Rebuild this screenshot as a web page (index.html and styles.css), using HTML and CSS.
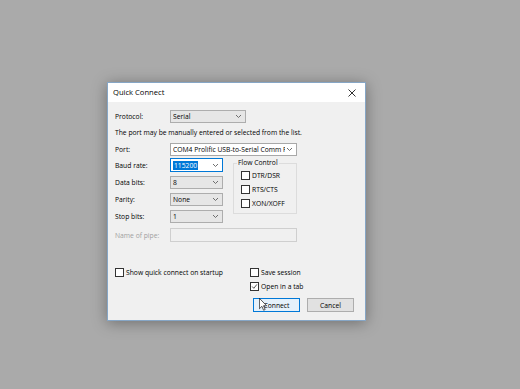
FILE: index.html
```html
<!DOCTYPE html>
<html lang="en">

<head>
    <meta charset="UTF-8">
    <title>Quick Connect</title>
    <link rel="stylesheet" href="styles.css">
</head>

<body>
    <div class="window">
        <div class="titlebar">
            <span class="title">Quick Connect</span>
            <svg class="close" viewBox="0 0 8 8"><path d="M0.5 0.5L7.5 7.5M7.5 0.5L0.5 7.5" /></svg>
        </div>
        <div class="content">
            <div class="row">
                <span class="label">Protocol:</span>
                <div class="combo list protocol">
                    <span class="value">Serial</span>
                    <svg class="chevron" viewBox="0 0 5 3"><path d="M0 0L2.5 2.5L5 0" /></svg>
                </div>
            </div>
            <p class="hint">The port may be manually entered or selected from the list.</p>
            <div class="row port-row">
                <span class="label">Port:</span>
                <div class="combo edit wide">
                    <span class="value">COM4 Prolific USB-to-Serial Comm Port</span>
                    <svg class="chevron" viewBox="0 0 5 3"><path d="M0 0L2.5 2.5L5 0" /></svg>
                </div>
            </div>
            <div class="serial">
                <div class="fields">
                    <div class="row">
                        <span class="label">Baud rate:</span>
                        <div class="combo edit narrow focused">
                            <span class="value"><span class="selected">115200</span></span>
                            <svg class="chevron" viewBox="0 0 5 3"><path d="M0 0L2.5 2.5L5 0" /></svg>
                        </div>
                    </div>
                    <div class="row">
                        <span class="label">Data bits:</span>
                        <div class="combo list narrow">
                            <span class="value">8</span>
                            <svg class="chevron" viewBox="0 0 5 3"><path d="M0 0L2.5 2.5L5 0" /></svg>
                        </div>
                    </div>
                    <div class="row">
                        <span class="label">Parity:</span>
                        <div class="combo list narrow">
                            <span class="value">None</span>
                            <svg class="chevron" viewBox="0 0 5 3"><path d="M0 0L2.5 2.5L5 0" /></svg>
                        </div>
                    </div>
                    <div class="row">
                        <span class="label">Stop bits:</span>
                        <div class="combo list narrow">
                            <span class="value">1</span>
                            <svg class="chevron" viewBox="0 0 5 3"><path d="M0 0L2.5 2.5L5 0" /></svg>
                        </div>
                    </div>
                </div>
                <fieldset class="flow">
                    <legend>Flow Control</legend>
                    <label class="check"><span class="box"></span>DTR/DSR</label>
                    <label class="check"><span class="box"></span>RTS/CTS</label>
                    <label class="check"><span class="box"></span>XON/XOFF</label>
                </fieldset>
            </div>
            <div class="row pipe-row">
                <span class="label disabled">Name of pipe:</span>
                <div class="textbox disabled-box wide"></div>
            </div>
            <div class="options">
                <label class="check"><span class="box"></span>Show quick connect on startup</label>
                <div class="session">
                    <label class="check"><span class="box"></span>Save session</label>
                    <label class="check">
                        <span class="box"><svg class="tick" viewBox="0 0 9 9"><path d="M1.5 4.5L3.6 6.8L7.6 1.8" /></svg></span>Open in a tab
                    </label>
                </div>
            </div>
            <div class="buttons">
                <button class="btn default">Connect</button>
                <button class="btn">Cancel</button>
            </div>
        </div>
        <!-- mouse pointer sitting over the Connect button -->
        <svg class="cursor" viewBox="0 0 12 20"><path d="M0.5 0.5V16.5L4.3 12.8L6.9 18.8L9.3 17.8L6.8 11.9H11.6Z" /></svg>
    </div>
</body>

</html>
```

FILE: styles.css
```css
:root {
    --desktop: #aaaaaa;
    --face: #f0f0f0;
    --border: #adadad;
    --accent: #0078d7;
}

* {
    box-sizing: border-box;
    margin: 0;
    padding: 0;
}

body {
    width: 520px;
    height: 389px;
    overflow: hidden;
    background: var(--desktop);
    padding: 82px 0 0 107px;
    font-family: "Open Sans", "Noto Sans", sans-serif;
    font-size: 6.75px;
    line-height: 9px;
    color: #000;
}

.window {
    position: relative;
    width: 259px;
    height: 239px;
    border: 1px solid #86a6c6;
    background: var(--face);
    box-shadow: 0 2px 14px rgba(0, 0, 0, 0.35);
}

.titlebar {
    height: 19px;
    background: #fff;
    display: flex;
    align-items: center;
    padding: 0 9px 0 5px;
}

.title {
    flex: 1;
    font-size: 7.6px;
}

.close {
    width: 8px;
    height: 8px;
    fill: none;
    stroke: #333;
    stroke-width: 1;
}

.content {
    padding: 8px 0 0 7px;
}

.row {
    display: flex;
    align-items: center;
}

.label {
    width: 55px;
}

.label.disabled {
    color: #a0a0a0;
}

.combo {
    display: flex;
    align-items: center;
    height: 13px;
    border: 1px solid var(--border);
    padding: 0 4px 0 2px;
}

.combo.list {
    background: #e6e6e6;
}

.combo.edit {
    background: #fff;
    border-color: #a8a8a8;
}

.combo.focused {
    height: 14px;
    border-color: var(--accent);
}

.protocol {
    width: 76px;
}

.wide {
    width: 127px;
}

.narrow {
    width: 53px;
}

.value {
    flex: 1;
    white-space: nowrap;
    overflow: hidden;
}

.selected {
    background: var(--accent);
    color: #fff;
    padding: 0 1px;
}

.chevron {
    width: 5px;
    height: 3px;
    margin-left: 2px;
    fill: none;
    stroke: #606060;
    stroke-width: 0.9;
}

.hint {
    margin-top: 5px;
    line-height: 10px;
}

.port-row {
    margin-top: 5px;
}

.serial {
    display: flex;
    margin-top: 2px;
}

.fields {
    display: flex;
    flex-direction: column;
    gap: 4px;
}

.flow {
    margin: 1px 0 0 10px;
    width: 64px;
    height: 55px;
    border: 1px solid #dcdcdc;
    padding: 0 0 0 3px;
}

.flow legend {
    padding: 0 1px;
    line-height: 8px;
}

.flow .check {
    margin: 4px 0 0 4px;
}

.flow .check + .check {
    margin-top: 5px;
}

.check {
    display: flex;
    align-items: center;
    gap: 2px;
    height: 9px;
}

.box {
    display: flex;
    width: 9px;
    height: 9px;
    border: 1px solid #333;
    background: #fff;
}

.tick {
    width: 7px;
    height: 7px;
    fill: none;
    stroke: #222;
    stroke-width: 1;
}

.pipe-row {
    margin-top: 5px;
}

.textbox {
    height: 14px;
    border: 1px solid #cfcfcf;
}

.disabled-box {
    background: var(--face);
}

.options {
    display: grid;
    grid-template-columns: 135px auto;
    margin-top: 26px;
}

.session {
    display: flex;
    flex-direction: column;
    gap: 5px;
}

.buttons {
    display: flex;
    gap: 7px;
    margin: 7px 0 0 138px;
}

.btn {
    width: 47px;
    height: 14px;
    font: inherit;
    color: #000;
    background: #e1e1e1;
    border: 1px solid var(--border);
}

.btn.default {
    background: #e5f1fb;
    border-color: var(--accent);
}

.cursor {
    position: absolute;
    left: 151px;
    top: 215px;
    width: 8px;
    height: 13px;
    fill: #fff;
    stroke: #000;
    stroke-width: 1;
}
```
